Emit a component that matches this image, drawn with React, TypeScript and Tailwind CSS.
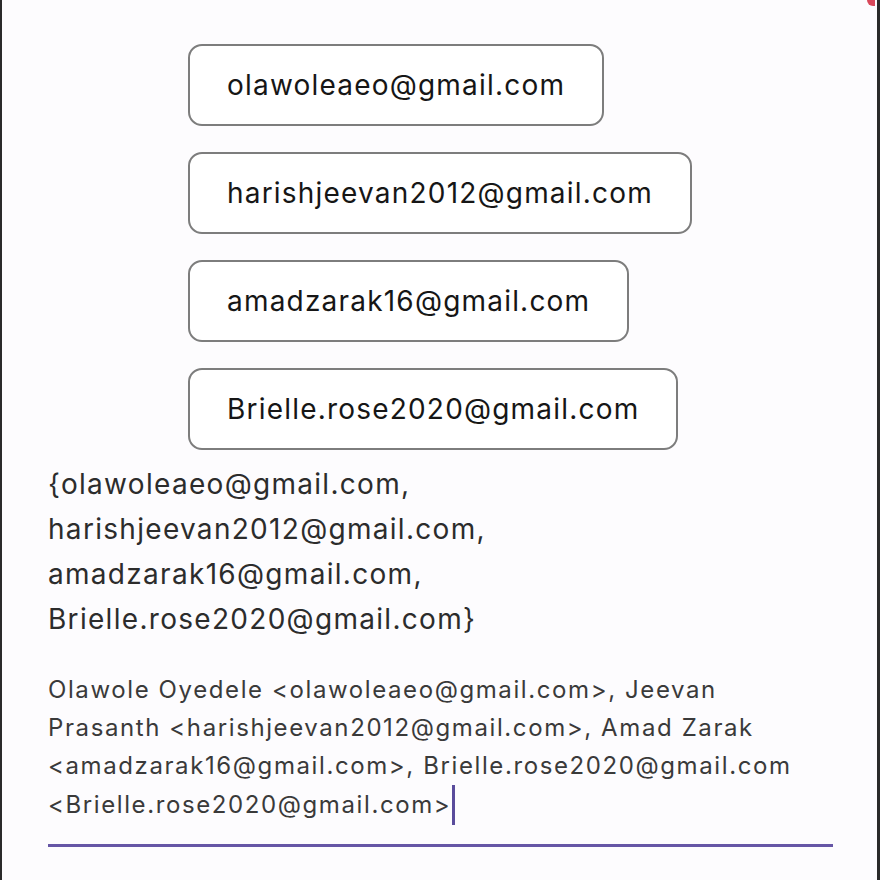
import React from "react";

const chips = [
  "olawoleaeo@gmail.com",
  "harishjeevan2012@gmail.com",
  "amadzarak16@gmail.com",
  "Brielle.rose2020@gmail.com",
];

export default function App() {
  return (
    <div
      className="relative w-[880px] h-[880px] overflow-hidden bg-[#fdfcfe] border-l-2 border-r-[3px] border-[#2a2a2a]"
      style={{ fontFamily: "Inter, 'Noto Sans', sans-serif" }}
    >
      <div className="absolute right-[2px] top-0 w-[8px] h-[6px] rounded-bl-full bg-[#d9485a]" />
      <div className="flex flex-col items-start pl-[186px] pt-[44px] gap-[26px]">
        {chips.map((c) => (
          <div
            key={c}
            className="h-[82px] flex items-center px-[37px] rounded-[14px] border-2 border-[#7d7d7d] bg-white text-[28px] tracking-[1.2px] text-[#161616]"
          >
            {c}
          </div>
        ))}
      </div>
      <div className="pl-[46px] pt-[12px] text-[28px] leading-[45px] tracking-[1.3px] text-[#2c2c2c]">
        <div>{"{olawoleaeo@gmail.com,"}</div>
        <div>harishjeevan2012@gmail.com,</div>
        <div>amadzarak16@gmail.com,</div>
        <div>{"Brielle.rose2020@gmail.com}"}</div>
      </div>
      <div className="ml-[46px] mr-[44px] mt-[29px] border-b-[3px] border-[#6656a6] pb-[19px] text-[24px] leading-[38px] tracking-[1.6px] text-[#3a3a3a]">
        <div>Olawole Oyedele &lt;olawoleaeo@gmail.com&gt;, Jeevan</div>
        <div>Prasanth &lt;harishjeevan2012@gmail.com&gt;, Amad Zarak</div>
        <div>&lt;amadzarak16@gmail.com&gt;, Brielle.rose2020@gmail.com</div>
        <div className="flex items-center">
          <span>&lt;Brielle.rose2020@gmail.com&gt;</span>
          <span className="inline-block w-[3px] h-[40px] bg-[#5a4c9c] ml-[1px]" />
        </div>
      </div>
    </div>
  );
}
